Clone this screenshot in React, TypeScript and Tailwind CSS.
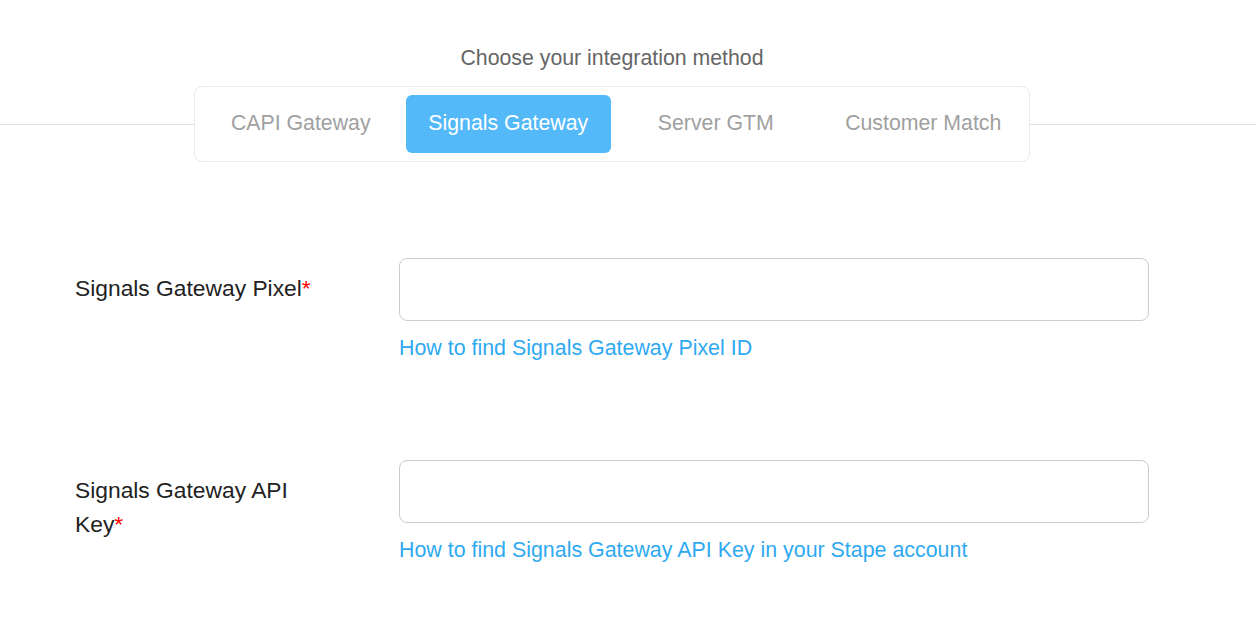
import { useState } from 'react';

const tabs = ['CAPI Gateway', 'Signals Gateway', 'Server GTM', 'Customer Match'];

interface FieldProps {
  label: string;
  help: string;
}

function Field({ label, help }: FieldProps) {
  return (
    <div className="flex items-start">
      <label className="w-[399px] shrink-0 pl-[75px] pr-[79px] pt-[13px] text-[22.8px] leading-[34px] text-[#222]">
        {label}
        <span className="text-[#ff0000]">*</span>
      </label>
      <div className="w-[750px] shrink-0">
        <input
          type="text"
          className="block h-[63px] w-full rounded-lg border border-[#cccccc] bg-white px-4 text-[20px] outline-none"
        />
        <a href="#" className="mt-[14px] block text-[21.4px] leading-[26px] text-[#2fa9f1]">
          {help}
        </a>
      </div>
    </div>
  );
}

export default function App() {
  const [active, setActive] = useState(1);

  return (
    <div
      className="min-h-screen bg-white pt-[45px]"
      style={{ fontFamily: '"Liberation Sans", Arial, sans-serif' }}
    >
      <h2 className="pr-[32px] text-center text-[21.3px] leading-[26px] text-[#666]">
        Choose your integration method
      </h2>

      <div className="mt-[15px] flex items-center">
        <div className="h-px flex-1 bg-[#e0e0e0]" />
        <div className="grid w-[836px] grid-cols-4 gap-[2px] rounded-lg border border-[#e7ebef] px-[3px] py-[8px]">
          {tabs.map((t, i) => (
            <button
              key={t}
              onClick={() => setActive(i)}
              className={
                i === active
                  ? 'h-[58px] rounded-md bg-[#53b9f9] text-[21.3px] text-white'
                  : 'h-[58px] rounded-md text-[21.3px] text-[#a0a0a0]'
              }
            >
              {t}
            </button>
          ))}
        </div>
        <div className="h-px w-[226px] bg-[#e0e0e0]" />
      </div>

      <div className="mt-[96px] flex flex-col gap-[99px]">
        <Field label="Signals Gateway Pixel" help="How to find Signals Gateway Pixel ID" />
        <Field
          label="Signals Gateway API Key"
          help="How to find Signals Gateway API Key in your Stape account"
        />
      </div>
    </div>
  );
}
